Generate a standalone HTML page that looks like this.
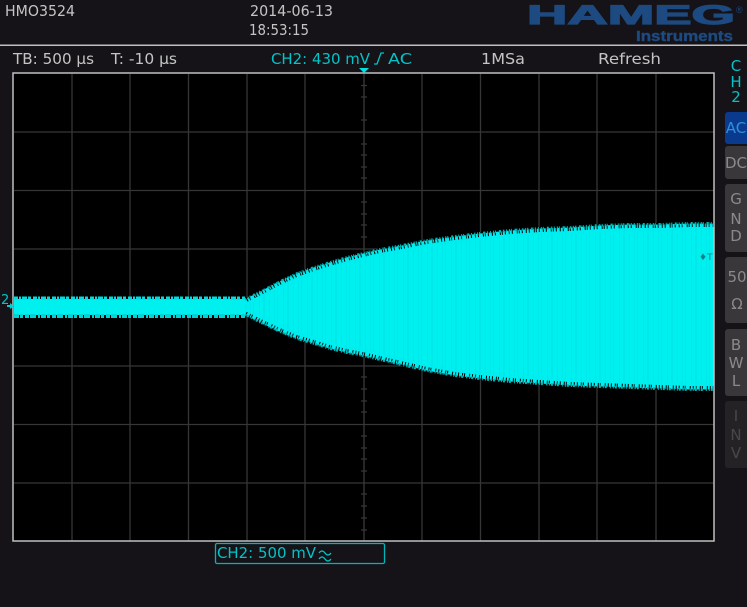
<!DOCTYPE html>
<html><head><meta charset="utf-8"><style>
html,body{margin:0;padding:0;background:#151317;width:747px;height:607px;overflow:hidden}
svg{display:block;filter:blur(0.35px)}
text{font-family:"DejaVu Sans","Liberation Sans",sans-serif;font-size:15px}
.g{fill:#c4c4c4}.c{fill:#00c4c8}
</style></head><body>
<svg width="747" height="607" viewBox="0 0 747 607" xmlns="http://www.w3.org/2000/svg">
<defs>
<path id="top" d="M245 298 L263 289 L280 280 L297 272 L314 266 L330 261 L347 256 L363 252 L380 248 L397 245 L427 239 L455 235 L480 232 L510 229 L540 227 L570 226 L600 224 L630 223 L660 223 L690 222 L714 222" fill="none"/>
<path id="bot" d="M245 316 L263 325 L280 333 L297 340 L314 345 L330 350 L347 354 L363 357 L380 361 L397 365 L427 372 L455 377 L480 380 L510 383 L540 385 L570 387 L600 388 L630 389 L660 390 L690 391 L714 391" fill="none"/>
<clipPath id="env"><path d="M245 298 L263 289 L280 280 L297 272 L314 266 L330 261 L347 256 L363 252 L380 248 L397 245 L427 239 L455 235 L480 232 L510 229 L540 227 L570 226 L600 224 L630 223 L660 223 L690 222 L714 222 L714 391 L690 391 L660 390 L630 389 L600 388 L570 387 L540 385 L510 383 L480 380 L455 377 L427 372 L397 365 L380 361 L363 357 L347 354 L330 350 L314 345 L297 340 L280 333 L263 325 L245 316 Z"/></clipPath>
</defs>
<rect width="747" height="607" fill="#151317"/>
<rect x="0" y="44.500" width="747" height="1.500" fill="#c0c0c0"/>

<text class="g" x="5" y="16" textLength="70" lengthAdjust="spacingAndGlyphs">HMO3524</text>
<text class="g" x="250" y="16" textLength="83" lengthAdjust="spacingAndGlyphs">2014-06-13</text>
<text class="g" x="249" y="35" textLength="60" lengthAdjust="spacingAndGlyphs">18:53:15</text>

<text x="527" y="24" textLength="208" lengthAdjust="spacingAndGlyphs" style="font-family:'Liberation Sans',sans-serif;font-weight:bold;font-size:27px" fill="#1d4a80" stroke="#1d4a80" stroke-width="1.200">HAMEG</text>
<text x="736" y="13" style="font-family:'Liberation Sans',sans-serif;font-size:9px" fill="#1d4a80">®</text>
<text x="636" y="41" textLength="97" lengthAdjust="spacingAndGlyphs" style="font-family:'Liberation Sans',sans-serif;font-weight:bold;font-size:15px" fill="#1d4a80" stroke="#1d4a80" stroke-width="0.400">Instruments</text>

<text class="g" x="13" y="64" textLength="81" lengthAdjust="spacingAndGlyphs">TB: 500 µs</text>
<text class="g" x="111" y="64" textLength="66" lengthAdjust="spacingAndGlyphs">T: -10 µs</text>
<text class="c" x="271" y="64" textLength="99" lengthAdjust="spacingAndGlyphs">CH2: 430 mV</text>
<path d="M374 64 L377 64 L381 53 L384 53" fill="none" stroke="#00c4c8" stroke-width="1.300"/>
<text class="c" x="388" y="64" textLength="24" lengthAdjust="spacingAndGlyphs">AC</text>
<text class="g" x="481" y="64" textLength="44" lengthAdjust="spacingAndGlyphs">1MSa</text>
<text class="g" x="598" y="64" textLength="63" lengthAdjust="spacingAndGlyphs">Refresh</text>

<text class="c" x="736" y="71" text-anchor="middle">C</text>
<text class="c" x="736" y="87" text-anchor="middle">H</text>
<text class="c" x="736" y="102" text-anchor="middle">2</text>

<rect x="13" y="73" width="701" height="468" fill="#000"/>
<g stroke="#363636" stroke-width="1.300" fill="none">
<path d="M72 74V541M130 74V541M188.500 74V541M247 74V541M305 74V541M422 74V541M480.500 74V541M539 74V541M597 74V541M656 74V541"/>
<path d="M14 132H714M14 190.500H714M14 249H714M14 366H714M14 424.500H714M14 483H714"/>
<path d="M364 74V541" stroke="#3a3a3a"/>
<path d="M361 85.500h6M361 97h6M361 120h6M361 144h6M361 155h6M361 167h6M361 178h6M361 202h6M361 214h6M361 225h6M361 237h6M361 261h6M361 272h6M361 284h6M361 296h6M361 319h6M361 331h6M361 342h6M361 354h6M361 377h6M361 389h6M361 401h6M361 412h6M361 436h6M361 448h6M361 459h6M361 471h6M361 494h6M361 506h6M361 518h6M361 530h6"/>
</g>

<!-- flat baseline -->
<rect x="14" y="299" width="232" height="16" fill="#00f0f0"/>
<path d="M14 298 L245 298" fill="none" stroke="#00dcdf" stroke-width="3" stroke-dasharray="4 1 2 1 5 1 3 2"/>
<path d="M14 316 L245 316" fill="none" stroke="#00d4d8" stroke-width="4" stroke-dasharray="5 1 3 2 4 1 6 2 2 1"/>

<!-- envelope body -->
<g clip-path="url(#env)">
<rect x="245" y="215" width="470" height="180" fill="#000"/>
<g transform="translate(0,5)"><path d="M245 298 L263 289 L280 280 L297 272 L314 266 L330 261 L347 256 L363 252 L380 248 L397 245 L427 239 L455 235 L480 232 L510 229 L540 227 L570 226 L600 224 L630 223 L660 223 L690 222 L714 222 L714 381 L690 381 L660 380 L630 379 L600 378 L570 377 L540 375 L510 373 L480 370 L455 367 L427 362 L397 355 L380 351 L363 347 L347 344 L330 340 L314 335 L297 330 L280 323 L263 315 L245 306 Z" fill="#00f0f0"/></g>
<path d="M245 307H714" stroke="#00d8dc" stroke-width="180" stroke-opacity=".3" stroke-dasharray="1 4 1 2 1 5 1 3 2 4" fill="none"/>
<use href="#top" transform="translate(0,5)" stroke="#00ecee" stroke-width="7" stroke-dasharray="3 1 2 1 4 1 1 1 2 1"/>
<use href="#bot" transform="translate(0,-5)" stroke="#00ecee" stroke-width="7" stroke-dasharray="2 1 3 1 1 1 4 1 2 1"/>
<use href="#top" transform="translate(0,1)" stroke="#00b4b8" stroke-width="3" stroke-dasharray="1 2 1 1 1 3 2 2 1 2"/>
<use href="#bot" transform="translate(0,-1)" stroke="#00b4b8" stroke-width="3" stroke-dasharray="1 1 2 3 1 2 1 1 2 2"/>
</g>
<text x="699" y="260" style="font-size:9px" fill="#0a8288">♦T</text>

<rect x="13" y="73" width="701" height="468" fill="none" stroke="#c0c0c0" stroke-width="1.500"/>

<path d="M359 68h10l-5 5z" fill="#00e0e0"/>
<text class="c" x="1" y="304" style="font-size:13px">2</text>
<path d="M7 305h3v-2l4 3-4 3v-2H7z" fill="#00d0d4"/>

<rect x="215.500" y="543.500" width="169" height="20" rx="1.500" fill="#151317" stroke="#00b4b8" stroke-width="1.300"/>
<text class="c" x="217" y="558" textLength="99" lengthAdjust="spacingAndGlyphs">CH2: 500 mV</text>
<path d="M319 553q3-4 6 0t6 0M319 559q3-4 6 0t6 0" fill="none" stroke="#00c4c8" stroke-width="1.300"/>

<rect x="725" y="112" width="30" height="32" rx="3" fill="#0a3a8e"/>
<rect x="725" y="146" width="30" height="33" rx="3" fill="#3a373b"/>
<rect x="725" y="184" width="30" height="68" rx="3" fill="#3a373b"/>
<rect x="725" y="257" width="30" height="66" rx="3" fill="#3a373b"/>
<rect x="725" y="329" width="30" height="67" rx="3" fill="#3a373b"/>
<rect x="725" y="401" width="30" height="67" rx="3" fill="#242225"/>

<text x="736" y="133" text-anchor="middle" fill="#2f8fe0">AC</text>
<text x="736" y="168" text-anchor="middle" fill="#8c898c">DC</text>
<g fill="#8c898c" text-anchor="middle">
<text x="736" y="204">G</text><text x="736" y="224">N</text><text x="736" y="241">D</text>
<text x="737" y="282">50</text><text x="737" y="309">Ω</text>
<text x="736" y="350">B</text><text x="736" y="368">W</text><text x="736" y="386">L</text>
</g>
<g fill="#4a474b" text-anchor="middle">
<text x="736" y="421">I</text><text x="736" y="440">N</text><text x="736" y="458">V</text>
</g>
</svg>
</body></html>
